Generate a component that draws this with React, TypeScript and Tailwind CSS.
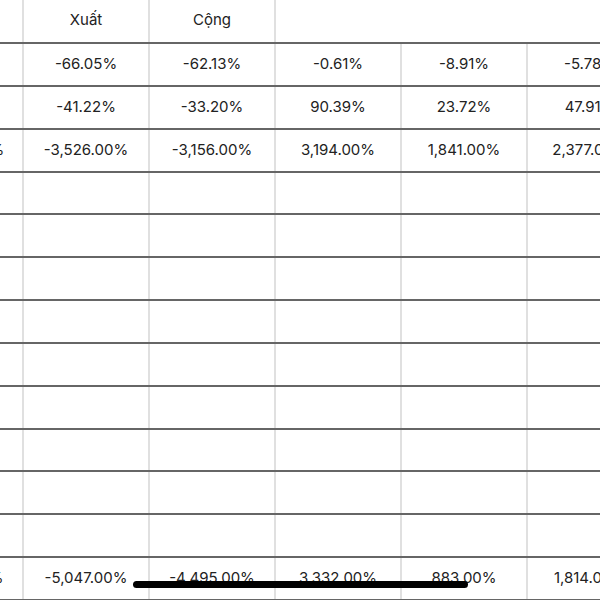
const rows: string[][] = [
  ["-5.10%", "-66.05%", "-62.13%", "-0.61%", "-8.91%", "-5.78%"],
  ["-2.15%", "-41.22%", "-33.20%", "90.39%", "23.72%", "47.91%"],
  ["-12,981.00%", "-3,526.00%", "-3,156.00%", "3,194.00%", "1,841.00%", "2,377.00%"],
  ["", "", "", "", "", ""],
  ["", "", "", "", "", ""],
  ["", "", "", "", "", ""],
  ["", "", "", "", "", ""],
  ["", "", "", "", "", ""],
  ["", "", "", "", "", ""],
  ["", "", "", "", "", ""],
  ["", "", "", "", "", ""],
  ["", "", "", "", "", ""],
  ["-14,120.00%", "-5,047.00%", "-4,495.00%", "3,332.00%", "883.00%", "1,814.00%"],
];

const header = ["", "Xuất", "Cộng", "", "", ""];

export default function App() {
  return (
    <div className="relative w-[600px] h-[600px] overflow-hidden bg-white text-[#222] font-['Inter','Liberation_Sans',sans-serif] text-[15px]">
      <div className="ml-[-102px] w-[760px]">
        {/* header */}
        <div className="flex h-[42px]">
          {header.map((h, i) => (
            <div
              key={i}
              className={
                "w-[126px] shrink-0 flex items-center justify-center pb-[2px] " +
                (i < 3 ? "border-r-2 border-[#e0e0e0]" : "")
              }
            >
              {h}
            </div>
          ))}
        </div>
        {/* body */}
        {rows.map((r, ri) => (
          <div key={ri} className="flex h-[42.85px] border-t-2 border-[#666]">
            {r.map((c, ci) => (
              <div
                key={ci}
                className="w-[126px] shrink-0 flex items-center justify-center border-r-2 border-[#e0e0e0] whitespace-nowrap"
              >
                {c}
              </div>
            ))}
          </div>
        ))}
        <div className="border-t-2 border-[#666]" />
      </div>
      {/* home indicator */}
      <div className="absolute left-[133px] top-[581px] w-[335px] h-[7px] rounded-full bg-black" />
    </div>
  );
}
